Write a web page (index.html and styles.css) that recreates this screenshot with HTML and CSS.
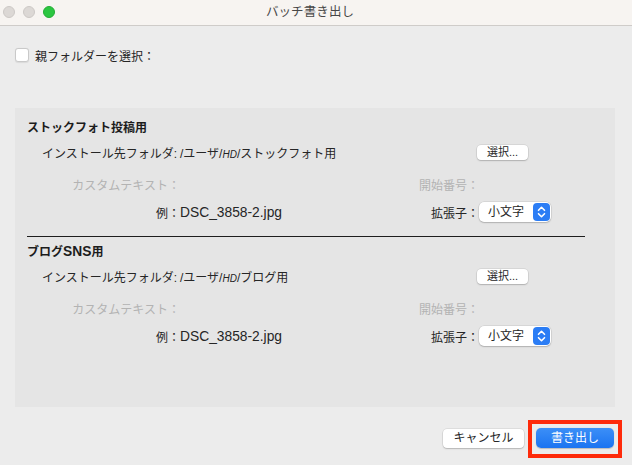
FILE: index.html
```html
<!DOCTYPE html>
<html lang="ja">
<head>
<meta charset="utf-8">
<title>バッチ書き出し</title>
<link rel="stylesheet" href="styles.css">
</head>
<body>
<div class="window">
  <header class="titlebar">
    <div class="lights">
      <span class="light"></span>
      <span class="light"></span>
      <span class="light green"></span>
    </div>
    <div class="title">バッチ書き出し</div>
  </header>
  <main class="content">
    <label class="parent">
      <span class="checkbox"></span>
      <span>親フォルダーを選択：</span>
    </label>
    <div class="panel">
      <section class="sec">
        <h2 class="heading">ストックフォト投稿用</h2>
        <div class="row r1">
          <span class="lbl half">インストール先フォルダ:</span>
          <span class="val">/ユーザ/<i class="hd">HD</i>/ストックフォト用</span>
          <span class="rl"></span>
          <button class="btn small">選択...</button>
        </div>
        <div class="row r2 dim">
          <span class="lbl">カスタムテキスト：</span>
          <span class="val"></span>
          <span class="rl">開始番号：</span>
          <span></span>
        </div>
        <div class="row r3">
          <span class="lbl">例：</span>
          <span class="val lat">DSC_3858-2.jpg</span>
          <span class="rl">拡張子：</span>
          <span class="select"><span class="sel-text">小文字</span><svg class="stepper" width="17" height="18" viewBox="0 0 17 18"><rect x="0" y="0" width="17" height="18" rx="4" fill="#2b7df5"/><path d="M5.5 7.3 L8.5 4.3 L11.5 7.3" stroke="#fff" stroke-width="1.6" fill="none" stroke-linecap="round" stroke-linejoin="round"/><path d="M5.5 10.7 L8.5 13.7 L11.5 10.7" stroke="#fff" stroke-width="1.6" fill="none" stroke-linecap="round" stroke-linejoin="round"/></svg></span>
        </div>
      </section>
      <hr class="sep">
      <section class="sec">
        <h2 class="heading">ブログ<span class="lat">SNS</span>用</h2>
        <div class="row r1">
          <span class="lbl half">インストール先フォルダ:</span>
          <span class="val">/ユーザ/<i class="hd">HD</i>/ブログ用</span>
          <span class="rl"></span>
          <button class="btn small">選択...</button>
        </div>
        <div class="row r2 dim">
          <span class="lbl">カスタムテキスト：</span>
          <span class="val"></span>
          <span class="rl">開始番号：</span>
          <span></span>
        </div>
        <div class="row r3">
          <span class="lbl">例：</span>
          <span class="val lat">DSC_3858-2.jpg</span>
          <span class="rl">拡張子：</span>
          <span class="select"><span class="sel-text">小文字</span><svg class="stepper" width="17" height="18" viewBox="0 0 17 18"><rect x="0" y="0" width="17" height="18" rx="4" fill="#2b7df5"/><path d="M5.5 7.3 L8.5 4.3 L11.5 7.3" stroke="#fff" stroke-width="1.6" fill="none" stroke-linecap="round" stroke-linejoin="round"/><path d="M5.5 10.7 L8.5 13.7 L11.5 10.7" stroke="#fff" stroke-width="1.6" fill="none" stroke-linecap="round" stroke-linejoin="round"/></svg></span>
        </div>
      </section>
    </div>
    <footer class="footer">
      <button class="btn cancel">キャンセル</button>
      <div class="highlight">
        <button class="btn primary">書き出し</button>
      </div>
    </footer>
  </main>
</div>
</body>
</html>
```

FILE: styles.css
```css
* {
  box-sizing: border-box;
}

html, body {
  margin: 0;
  padding: 0;
}

body {
  width: 632px;
  height: 465px;
  overflow: hidden;
  background: #ececec;
  font-family: "Liberation Sans", "Noto Sans CJK JP", sans-serif;
  font-size: 12px;
  color: #262626;
  text-spacing-trim: space-all;
}

.window {
  width: 632px;
  height: 465px;
  display: flex;
  flex-direction: column;
}

/* title bar */
.titlebar {
  height: 26px;
  flex: 0 0 26px;
  background: #f7f4f1;
  border-bottom: 1px solid #cfccc9;
  display: flex;
  align-items: center;
}

.lights {
  display: flex;
  gap: 8px;
  padding-left: 3px;
  margin-top: -1px;
}

.light {
  width: 12px;
  height: 12px;
  border-radius: 50%;
  background: #dcd8d5;
  border: 1px solid #cdc9c6;
}

.light.green {
  background: #2bc641;
  border-color: #22ad35;
}

.title {
  flex: 1;
  text-align: center;
  margin-left: -67px;
  font-size: 12.5px;
  color: #474747;
  letter-spacing: 0.1px;
  line-height: 16px;
  margin-top: -1px;
}

/* content */
.content {
  flex: 1;
  display: flex;
  flex-direction: column;
}

.parent {
  display: flex;
  align-items: center;
  margin: 19px 0 0 15px;
  height: 20px;
  gap: 6px;
}

.checkbox {
  width: 14px;
  height: 14px;
  background: #fff;
  border: 1px solid #c9c9c9;
  border-radius: 3px;
  box-shadow: 0 0.5px 1px rgba(0, 0, 0, 0.08);
}

.panel {
  margin: 43px 0 0 15px;
  width: 600px;
  height: 299px;
  background: #e5e5e5;
  padding: 11px 30px 0 12px;
}

.heading {
  margin: 0;
  font-size: 12px;
  font-weight: bold;
  line-height: 18px;
  color: #1c1c1c;
}

.row {
  display: grid;
  grid-template-columns: 153px 229px 70px auto;
  align-items: center;
  height: 20px;
}

.r1 { margin-top: 5px; }
.r2 { margin-top: 12px; }
.r3 { margin-top: 8px; }

.lbl {
  text-align: right;
  white-space: nowrap;
}

.lbl.half {
  padding-right: 3px;
}

.val {
  white-space: nowrap;
}

.lat {
  font-size: 13.8px;
}

.hd {
  font-size: 10px;
  font-style: italic;
}

.rl {
  text-align: right;
  white-space: nowrap;
}

.dim {
  color: #b3b3b3;
}

.sep {
  margin: 14px 0 6px 0;
  border: 0;
  border-top: 1px solid #1e1e1e;
  height: 0;
  width: 558px;
}

/* buttons */
.btn {
  font-family: "Liberation Sans", "Noto Sans CJK JP", sans-serif;
  background: #fff;
  border: 0;
  border-radius: 4px;
  box-shadow: 0 0 0 0.5px rgba(0, 0, 0, 0.12), 0 1px 1.5px rgba(0, 0, 0, 0.18);
  color: #262626;
  padding: 0;
  cursor: default;
}

.btn.small {
  width: 51px;
  height: 15px;
  font-size: 11px;
  line-height: 15px;
  margin-left: -2px;
  justify-self: start;
}

.select {
  display: flex;
  align-items: center;
  justify-content: space-between;
  width: 72px;
  height: 20px;
  background: #fff;
  border-radius: 5px;
  box-shadow: 0 0 0 0.5px rgba(0, 0, 0, 0.12), 0 1px 1.5px rgba(0, 0, 0, 0.18);
  padding: 0 1px 0 9px;
}

.sel-text {
  line-height: 20px;
}

.stepper {
  display: block;
}

/* footer */
.footer {
  display: flex;
  justify-content: flex-end;
  align-items: center;
  gap: 4px;
  margin-top: 13px;
  padding-right: 10px;
}

.btn.cancel {
  width: 81px;
  height: 19px;
  font-size: 12px;
  line-height: 19px;
  margin-bottom: 1px;
}

.highlight {
  border: 4px solid #fe2a0a;
  padding: 4px 4px 6px 4px;
  width: 94px;
  height: 38px;
}

.btn.primary {
  width: 78px;
  height: 20px;
  font-size: 12px;
  line-height: 20px;
  color: #fff;
  background: linear-gradient(#3c8ff7, #1b74f1);
  box-shadow: 0 0.5px 1px rgba(0, 0, 0, 0.2);
  border-radius: 5px;
}
```
